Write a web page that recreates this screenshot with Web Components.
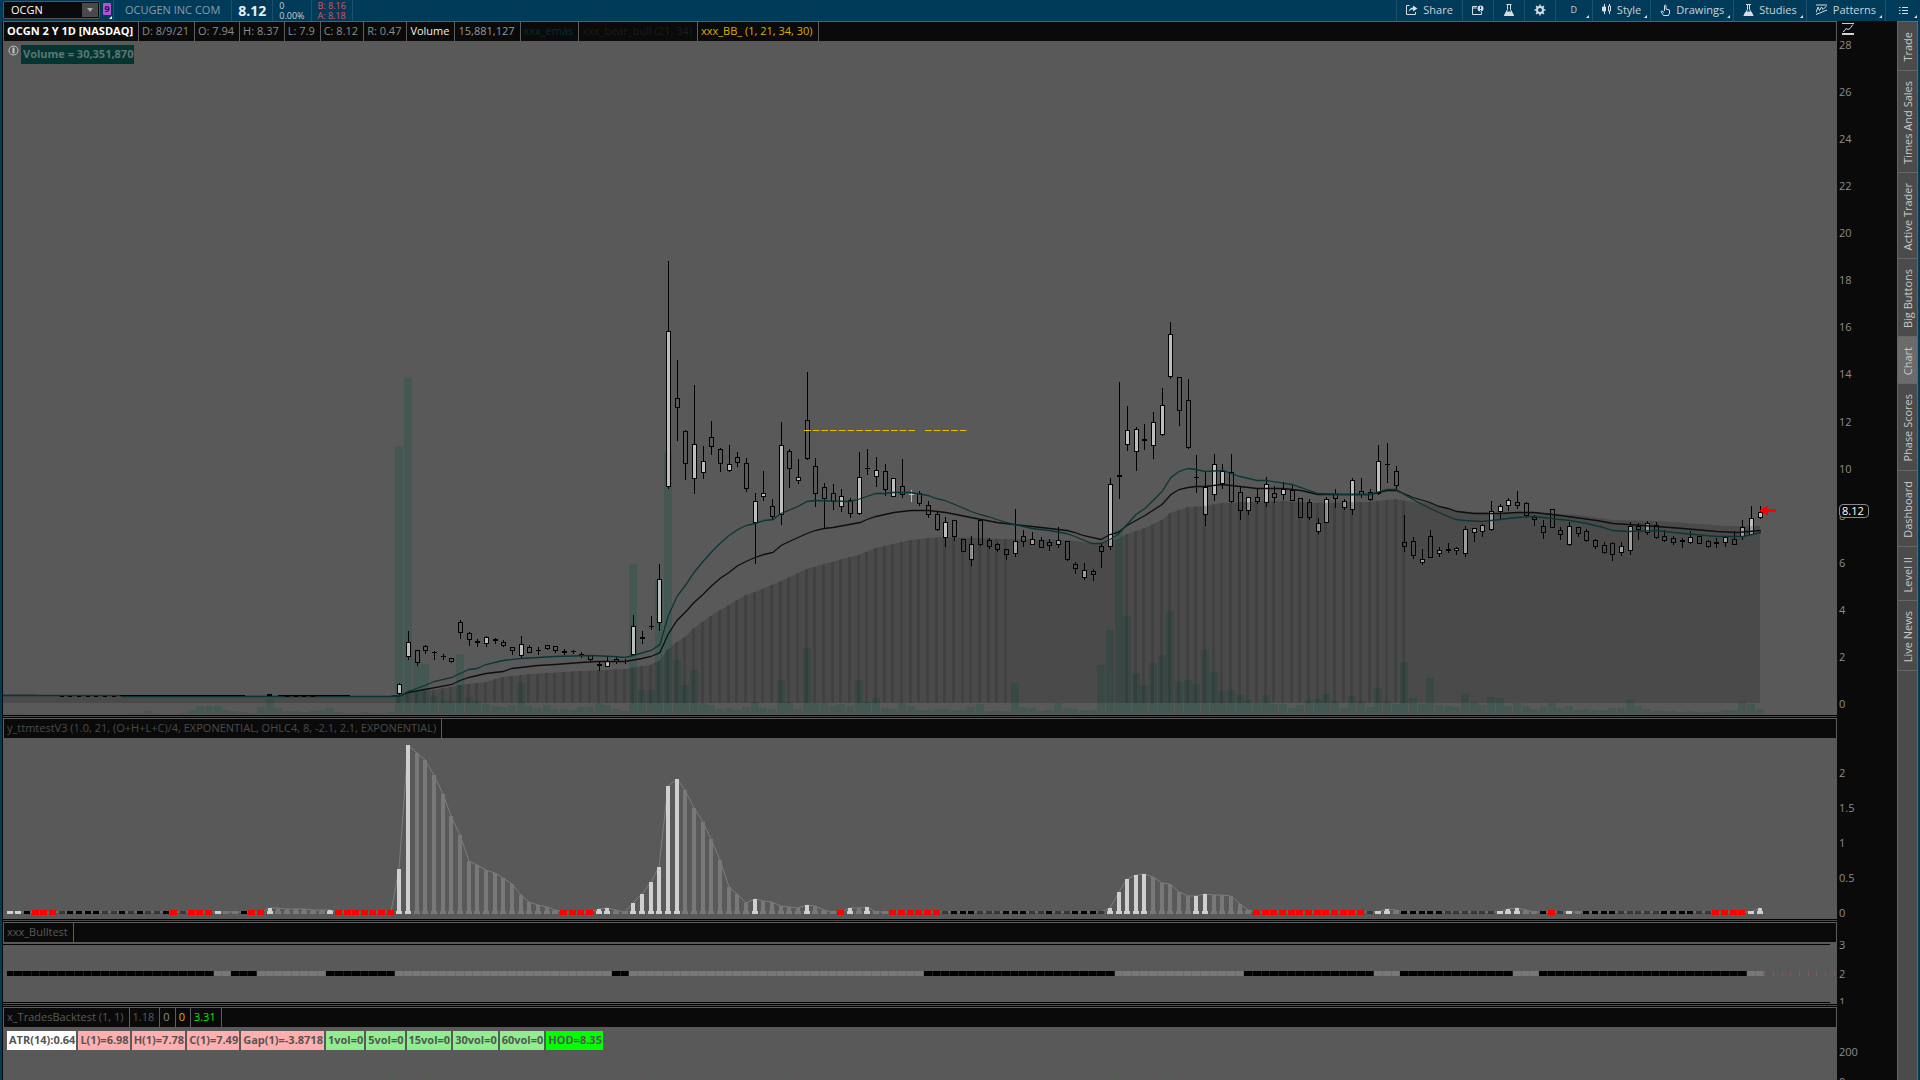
<!DOCTYPE html>
<html lang="en">
<head>
<meta charset="utf-8">
<title>OCGN - Charts</title>
<style>
    html, body {
        margin: 0;
        height: 100%;
    }
    body {
        background-color: #0a0a0a;
        color: #8c8c8c;
        font: 11px/14px "Open Sans", "Noto Sans", sans-serif;
        overflow: hidden;
    }
    .scale-price { padding: 0 0 5px; }
    .scale-momentum { padding: 49px 0 0; }
    .scale-bull { padding: 17px 0 0; margin-bottom: -4px; }
    .scale-backtest { padding: 39px 0 0; margin-bottom: -8px; }
</style>
</head>
<body>
<chart-app>
    <top-bar slot="top"></top-bar>

    <chart-pane style="--grow: 674">
        <head-cell slot="head" style="color: #fff; font-weight: 700">OCGN 2 Y 1D [NASDAQ]</head-cell>
        <head-cell slot="head">D: 8/9/21</head-cell>
        <head-cell slot="head">O: 7.94</head-cell>
        <head-cell slot="head">H: 8.37</head-cell>
        <head-cell slot="head">L: 7.9</head-cell>
        <head-cell slot="head">C: 8.12</head-cell>
        <head-cell slot="head">R: 0.47</head-cell>
        <head-cell slot="head" style="color: #eee">Volume</head-cell>
        <head-cell slot="head" style="color: #999">15,881,127</head-cell>
        <head-cell slot="head" style="color: #062f2c">xxx_emas</head-cell>
        <head-cell slot="head" style="color: #1c1c1c">xxx_bear_bull (21, 34)</head-cell>
        <head-cell slot="head" style="color: #d9ae00">xxx_BB_ (1, 21, 34, 30)</head-cell>
        <price-chart slot="plot"></price-chart>
        <volume-label slot="over">Volume = 30,351,870</volume-label>
        <price-scale slot="axis" class="scale-price" labels="28 26 24 22 20 18 16 14 12 10 8 6 4 2 0" last="8.12"></price-scale>
    </chart-pane>

    <chart-pane style="--grow: 181">
        <head-cell slot="head" style="color: #4a4a4a">y_ttmtestV3 (1.0, 21, (O+H+L+C)/4, EXPONENTIAL, OHLC4, 8, -2.1, 2.1, EXPONENTIAL)</head-cell>
        <momentum-chart slot="plot"></momentum-chart>
        <price-scale slot="axis" class="scale-momentum" labels="2 1.5 1 0.5 0"></price-scale>
    </chart-pane>

    <chart-pane style="--grow: 62">
        <head-cell slot="head" style="color: #595959">xxx_Bulltest</head-cell>
        <bull-chart slot="plot"></bull-chart>
        <price-scale slot="axis" class="scale-bull" labels="3 2 1"></price-scale>
    </chart-pane>

    <chart-pane style="--grow: 53" last>
        <head-cell slot="head" style="color: #595959">x_TradesBacktest (1, 1)</head-cell>
        <head-cell slot="head" style="color: #595959">1.18</head-cell>
        <head-cell slot="head">0</head-cell>
        <head-cell slot="head" style="color: #d9ae00">0</head-cell>
        <head-cell slot="head" style="color: #0e0">3.31</head-cell>
        <backtest-chart slot="plot"></backtest-chart>
        <chip-row slot="over">
            <stat-chip style="--chip: #fff">ATR(14):0.64</stat-chip>
            <stat-chip style="--chip: #ffafaf">L(1)=6.98</stat-chip>
            <stat-chip style="--chip: #ffafaf">H(1)=7.78</stat-chip>
            <stat-chip style="--chip: #ffafaf">C(1)=7.49</stat-chip>
            <stat-chip style="--chip: #ffafaf">Gap(1)=-3.8718</stat-chip>
            <stat-chip style="--chip: #90ee90">1vol=0</stat-chip>
            <stat-chip style="--chip: #90ee90">5vol=0</stat-chip>
            <stat-chip style="--chip: #90ee90">15vol=0</stat-chip>
            <stat-chip style="--chip: #90ee90">30vol=0</stat-chip>
            <stat-chip style="--chip: #90ee90">60vol=0</stat-chip>
            <stat-chip style="--chip: #0f0">HOD=8.35</stat-chip>
        </chip-row>
        <price-scale slot="axis" class="scale-backtest" labels="200 0"></price-scale>
    </chart-pane>

    <side-tabs slot="side"></side-tabs>
</chart-app>

<script>
// every bar sits on the same x grid, shared by all four panes
const BAR = 8.663;
const PRE = 45; // flat bars before the first spike
const barX = (k) => Math.floor(399.98 + k * BAR);

const svg = (top, height, body) => `
    <style>
        :host { display: block; height: 100%; }
        svg { display: block; width: 100%; height: 100%; }
    </style>
    <svg viewBox="3 ${top} 1834 ${height}" preserveAspectRatio="none" aria-hidden="true">${body}</svg>
`;

const rect = (x, y, w, h, fill) => `<rect x="${x}" y="${y}" width="${w}" height="${h}" fill="${fill}"/>`;

class ChartApp extends HTMLElement {
    constructor() {
        super();
        this.attachShadow({ mode: 'open' }).innerHTML = `
            <style>
                :host {
                    display: flex;
                    flex-direction: column;
                    height: 100vh;
                }
                .body {
                    flex: 1;
                    display: flex;
                    min-height: 0;
                    border-left: 2px solid #043a58;
                    border-right: 2px solid #043a58;
                }
                main {
                    flex: 1;
                    display: flex;
                    flex-direction: column;
                    min-width: 0;
                    padding-left: 1px;
                }
            </style>
            <slot name="top"></slot>
            <div class="body">
                <main><slot></slot></main>
                <slot name="side"></slot>
            </div>
        `;
        // the panes are the only children without a slot name
    }
}
window.customElements.define('chart-app', ChartApp);

class ToolButton extends HTMLElement {
    constructor() {
        super();
        this.attachShadow({ mode: 'open' }).innerHTML = `
            <style>
                :host {
                    display: flex;
                    position: relative;
                    border-left: 1px solid #1d506c;
                }
                button {
                    display: flex;
                    align-items: center;
                    justify-content: center;
                    gap: 5px;
                    width: 100%;
                    padding: 0 9px 2px;
                    border: 0;
                    background: none;
                    color: #c9d3d9;
                    font: inherit;
                }
                :host([menu])::after {
                    content: "";
                    position: absolute;
                    right: 3px;
                    bottom: 3px;
                    border: solid transparent;
                    border-width: 0 0 3px 3px;
                    border-bottom-color: #dde3e6;
                }
            </style>
            <button type="button"><slot name="icon"></slot><slot></slot></button>
        `;
        if (this.hasAttribute('label')) {
            this.shadowRoot.querySelector('button').setAttribute('aria-label', this.getAttribute('label'));
        }
    }
}
window.customElements.define('tool-button', ToolButton);

class TopBar extends HTMLElement {
    constructor() {
        super();
        this.attachShadow({ mode: 'open' }).innerHTML = `
            <style>
                :host {
                    display: flex;
                    flex: none;
                    height: 21px;
                    background-color: #003b5a;
                    color: #8a9ba6;
                }
                .symbol {
                    display: flex;
                    box-sizing: border-box;
                    width: 97px;
                    height: 18px;
                    margin: 1px 0 0 3px;
                    border: 1px solid #555;
                    border-radius: 2px;
                    background-color: #0a0a0a;
                }
                .symbol input {
                    flex: 1;
                    min-width: 0;
                    padding: 0 0 0 7px;
                    border: 0;
                    background: none;
                    color: #fff;
                    font: inherit;
                }
                .symbol button {
                    width: 16px;
                    padding: 0;
                    margin: 1px;
                    border: 0;
                    background-color: #4a4a4a;
                }
                .symbol svg { display: block; margin: auto; }
                .link {
                    position: relative;
                    box-sizing: border-box;
                    width: 13px;
                    padding: 3px 0 0 3px;
                }
                .badge {
                    display: block;
                    width: 8px;
                    height: 12px;
                    padding: 0;
                    border: 0;
                    border-radius: 1px;
                    background-color: #b452d4;
                    color: #24102c;
                    font: 700 9px/12px "Open Sans", sans-serif;
                }
                .link i {
                    position: absolute;
                    right: 1px;
                    bottom: 2px;
                    border: solid transparent;
                    border-width: 0 0 3px 3px;
                    border-bottom-color: #fff;
                }
                .cell {
                    display: flex;
                    align-items: center;
                    padding: 0 6px 2px;
                    border-left: 1px solid #1d506c;
                }
                .name { padding: 0 11px 2px; }
                .last { padding-bottom: 0; color: #e8eef2; font-size: 14px; font-weight: 700; }
                .two {
                    flex-direction: column;
                    align-items: flex-start;
                    justify-content: center;
                    padding-bottom: 0;
                    font-size: 9px;
                    line-height: 10px;
                    color: #c5cfd5;
                }
                .quote { color: #dc5560; border-right: 1px solid #1d506c; }
                nav { display: flex; margin-left: auto; }
                svg { fill: none; stroke: #d5dde2; }
            </style>
            <div class="symbol">
                <input value="OCGN" aria-label="Symbol">
                <button type="button" aria-label="Recent symbols"><svg width="8" height="5"><path d="M1 0h6L4 4z" fill="#aaa" stroke="none"/></svg></button>
            </div>
            <div class="link"><button class="badge" type="button">9</button><i></i></div>
            <div class="cell name">OCUGEN INC COM</div>
            <div class="cell last">8.12</div>
            <div class="cell two"><span>0</span><span>0.00%</span></div>
            <div class="cell two quote"><span>B: 8.16</span><span>A: 8.18</span></div>
            <nav>
                <tool-button><svg slot="icon" width="12" height="11"><path d="M3.500 1.500H.5v9h9V8"/><path d="M2.500 8C3 5 5 3.500 7 3.500V1.500L11.500 4.500 7 7.500V5.500C5 5.500 4 6 2.500 8z" fill="#d5dde2" stroke="none"/></svg>Share</tool-button>
                <tool-button label="Note"><svg slot="icon" width="12" height="10"><path d="M5 1.500H.5v8h9V7M.5 3h4"/><circle cx="8.500" cy="3.500" r="3" fill="#d5dde2" stroke="none"/><path d="M8.500 1.500v2.500M8.500 5v1" stroke="#003b5a"/></svg></tool-button>
                <tool-button label="Lab"><svg slot="icon" width="12" height="12"><path d="M3.500.5h5M4.500.5v5L1.500 11.500h9L7.500 5.500v-5"/><path d="M3.500 8h5l2 3.500h-9z" fill="#d5dde2"/></svg></tool-button>
                <tool-button label="Settings"><svg slot="icon" width="12" height="12"><circle cx="6" cy="6" r="3" stroke-width="2"/><path d="M6 .5v2M6 9.500v2M.5 6h2M9.500 6h2M2.100 2.100l1.500 1.500M8.400 8.400l1.500 1.500M2.100 9.900l1.500-1.500M8.400 3.600l1.500-1.500" stroke-width="1.500"/></svg></tool-button>
                <tool-button menu style="width: 36px; font-size: 9px">D</tool-button>
                <tool-button menu><svg slot="icon" width="10" height="11"><path d="M2.500 0v10M7.500 0v10"/><path d="M.5 3h3v4h-3z" fill="#d5dde2"/><path d="M6.500 2h2v5h-2z" fill="#003b5a"/></svg>Style</tool-button>
                <tool-button menu><svg slot="icon" width="11" height="12"><path d="M4.500 7V1.500a1 1 0 0 1 1.500 0V5L9.500 6v3l-1 2.500h-5L1 7.500l1-.5 2 1.500"/></svg>Drawings</tool-button>
                <tool-button menu><svg slot="icon" width="11" height="12"><path d="M3 .5h5M4.500.5v5L1 11.500h9L6.500 5.500v-5"/><path d="M3 8h5l2 3.500H1z" fill="#d5dde2"/></svg>Studies</tool-button>
                <tool-button menu><svg slot="icon" width="12" height="11"><path d="M0 1h11M0 8.500L2 3l1.500 3.500L5.500 3 7 5.500 10.500 2M0 10.500L11 6" /></svg>Patterns</tool-button>
                <tool-button menu label="Menu" style="width: 34px"><svg slot="icon" width="9" height="8"><path d="M0 1.500h1.500M3 1.500h6M0 4.500h1.500M3 4.500h6M0 7.500h1.500M3 7.500h6"/></svg></tool-button>
            </nav>
        `;
    }
}
window.customElements.define('top-bar', TopBar);

class ChartPane extends HTMLElement {
    constructor() {
        super();
        this.attachShadow({ mode: 'open' }).innerHTML = `
            <style>
                :host {
                    display: grid;
                    grid-template-columns: 1fr 60px;
                    grid-template-rows: 20px minmax(0, 1fr) 3px;
                    flex: var(--grow) 1 23px;
                    min-height: 0;
                }
                :host([last]) {
                    grid-template-rows: 20px minmax(0, 1fr);
                    flex-basis: 20px;
                }
                header {
                    display: flex;
                    border: 1px solid #5e5e5e;
                    border-bottom: 0;
                    background-color: #0a0a0a;
                    overflow: hidden;
                }
                .plot {
                    position: relative;
                    grid-row: 2;
                    min-height: 0;
                    background-color: #595959;
                }
                .over {
                    position: absolute;
                    left: 4px;
                    top: 4px;
                }
                .axis {
                    grid-column: 2;
                    grid-row: 1 / 3;
                    display: flex;
                    flex-direction: column;
                    min-height: 0;
                    overflow: hidden;
                }
                .split {
                    grid-row: 3;
                    height: 1px;
                    border: solid #000;
                    border-width: 1px 0;
                    background-color: #4a4a4a;
                }
                :host([last]) .split { display: none; }
            </style>
            <header><slot name="head"></slot></header>
            <div class="plot"><slot name="plot"></slot><div class="over"><slot name="over"></slot></div></div>
            <div class="axis"><slot name="axis"></slot></div>
            <div class="split"></div>
        `;
    }
}
window.customElements.define('chart-pane', ChartPane);

class HeadCell extends HTMLElement {
    constructor() {
        super();
        this.attachShadow({ mode: 'open' }).innerHTML = `
            <style>
                :host {
                    display: block;
                    padding: 0 5px 2px 3px;
                    border-right: 1px solid #5e5e5e;
                    line-height: 17px;
                    white-space: nowrap;
                }
            </style>
            <slot></slot>
        `;
    }
}
window.customElements.define('head-cell', HeadCell);

class VolumeLabel extends HTMLElement {
    constructor() {
        super();
        this.attachShadow({ mode: 'open' }).innerHTML = `
            <style>
                :host { display: flex; }
                svg { display: block; fill: none; stroke: #c4c4c4; }
                span {
                    padding: 0 1px 2px 2px;
                    background-color: #033531;
                    color: #5f7573;
                    font-weight: 700;
                    line-height: 17px;
                }
            </style>
            <svg width="14" height="13"><circle cx="6.500" cy="5.500" r="4.500"/><path d="M6.500 2.500v6" stroke-width="2"/></svg>
            <span><slot></slot></span>
        `;
    }
}
window.customElements.define('volume-label', VolumeLabel);

class ChipRow extends HTMLElement {
    constructor() {
        super();
        this.attachShadow({ mode: 'open' }).innerHTML = `
            <style>
                :host { display: flex; gap: 2px; }
            </style>
            <slot></slot>
        `;
    }
}
window.customElements.define('chip-row', ChipRow);

class StatChip extends HTMLElement {
    constructor() {
        super();
        this.attachShadow({ mode: 'open' }).innerHTML = `
            <style>
                :host {
                    display: block;
                    padding: 0 1px 2px 2px;
                    background-color: var(--chip);
                    color: #555;
                    font-weight: 700;
                    line-height: 17px;
                    white-space: nowrap;
                }
            </style>
            <slot></slot>
        `;
    }
}
window.customElements.define('stat-chip', StatChip);

class PriceScale extends HTMLElement {
    constructor() {
        super();
        const labels = this.getAttribute('labels').split(' ');
        const last = this.getAttribute('last');
        this.attachShadow({ mode: 'open' }).innerHTML = `
            <style>
                :host {
                    flex: 1;
                    display: flex;
                    flex-direction: column;
                    position: relative;
                    line-height: 12px;
                }
                .labels {
                    flex: 1;
                    display: flex;
                    flex-direction: column;
                    justify-content: space-between;
                    padding-left: 2px;
                }
                .fit {
                    height: 18px;
                    padding-left: 5px;
                }
                .fit svg { display: block; fill: none; stroke: #d0d0d0; }
                .last {
                    position: absolute;
                    left: 2px;
                    top: 70.6%;
                    transform: translateY(-50%);
                    padding: 0 4px 0 2px;
                    border: 1px solid #888;
                    border-radius: 4px;
                    background-color: #0a0a0a;
                    color: #fff;
                }
            </style>
            ${last ? '<div class="fit"><svg width="13" height="14"><path d="M0 2.500h12"/><path d="M0 13h12" stroke-width="2"/><path d="M1 10.500h1l2-3 2 1 2-1 3-4"/></svg></div>' : ''}
            <div class="labels">${labels.map((l) => `<span>${l}</span>`).join('')}</div>
            ${last ? `<div class="last">${last}</div>` : ''}
        `;
    }
}
window.customElements.define('price-scale', PriceScale);

class SideTabs extends HTMLElement {
    constructor() {
        super();
        const tabs = ['Trade', 'Times And Sales', 'Active Trader', 'Big Buttons', 'Chart', 'Phase Scores', 'Dashboard', 'Level II', 'Live News'];
        this.attachShadow({ mode: 'open' }).innerHTML = `
            <style>
                :host {
                    display: flex;
                    flex-direction: column;
                    box-sizing: border-box;
                    width: 21px;
                    border: solid #666;
                    border-width: 1px 1px 0;
                    background-color: #4b4b4b;
                }
                button {
                    width: 19px;
                    padding: 10px 0 8px;
                    border: 0;
                    border-bottom: 1px solid #666;
                    background: none;
                    color: #c8c8c8;
                    font: inherit;
                }
                button[aria-pressed] { background-color: #6b6b6b; }
                span {
                    display: inline-block;
                    writing-mode: vertical-rl;
                    transform: rotate(180deg);
                    line-height: 19px;
                    vertical-align: top;
                }
            </style>
            ${tabs.map((t) => `<button type="button"${t === 'Chart' ? ' aria-pressed="true"' : ''}><span>${t}</span></button>`).join('')}
        `;
    }
}
window.customElements.define('side-tabs', SideTabs);

// high, body top, body bottom, low; last field: 1 = up bar, 0 = down bar, 2 = doji, 3 = highlighted doji
const CANDLES = [
    [683,684,693,694,1],[631,642,656,659,1],[650,650,662,665,0],[645,646,650,653,0],[651,652,652,659,2],
    [654,656,656,659,2],[658,658,661,662,0],[620,622,632,638,0],[632,633,639,645,0],[639,641,642,646,2],
    [636,637,643,646,1],[638,639,640,643,2],[640,642,645,646,0],[647,647,650,654,0],[636,644,655,658,1],
    [645,647,652,652,0],[647,650,650,654,2],[645,645,648,649,0],[646,646,650,652,0],[649,651,652,654,2],
    [650,651,651,653,2],[652,654,654,657,2],[655,655,659,660,0],[661,664,665,670,2],[657,661,666,666,1],
    [657,659,661,663,0],[659,661,661,663,2],[615,626,654,655,1],[631,637,638,643,2],[616,626,626,629,2],
    [564,579,622,630,1],[261,331,486,488,1],[360,398,407,440,0],[430,431,463,479,0],[385,444,478,493,1],
    [446,461,472,478,1],[421,437,446,454,0],[448,449,463,471,0],[445,464,470,471,1],[452,457,462,466,0],
    [458,463,488,491,0],[493,501,522,563,1],[471,493,496,500,1],[499,506,516,519,0],[422,445,514,524,1],
    [449,451,468,487,0],[459,477,480,483,1],[372,420,458,459,0],[458,466,493,506,0],[483,487,498,527,0],
    [484,493,501,509,0],[489,496,506,511,1],[498,500,513,517,0],[452,477,513,514,1],[449,468,468,474,2],
    [457,470,476,486,1],[464,471,489,495,0],[478,478,496,496,1],[459,486,494,497,0],[490,494,494,501,3],
    [491,493,503,505,0],[501,505,514,517,0],[511,514,529,530,0],[517,522,537,546,1],[520,520,536,540,0],
    [539,539,551,551,0],[536,544,559,565,1],[520,520,544,545,0],[538,540,546,548,0],[543,544,549,551,0],
    [549,549,554,559,0],[509,541,553,556,1],[530,536,541,546,0],[532,539,544,544,1],[537,540,547,547,0],
    [539,542,545,550,0],[527,540,544,547,1],[541,541,559,560,0],[562,564,568,573,0],[563,570,577,579,1],
    [569,571,574,580,0],[544,546,551,567,0],[478,484,546,549,1],[382,475,476,498,2],[406,430,444,450,1],
    [427,429,451,470,1],[424,439,440,449,2],[412,422,445,458,1],[388,405,434,435,1],[322,334,376,378,1],
    [377,377,410,425,0],[379,400,447,448,0],[455,477,477,492,2],[472,487,514,525,1],[454,464,494,500,1],
    [464,471,483,488,1],[454,472,501,502,0],[486,492,510,519,0],[497,497,510,514,1],[489,497,501,503,0],
    [477,484,502,506,1],[486,493,497,502,0],[482,489,494,499,1],[485,490,500,500,0],[498,498,517,517,0],
    [499,502,517,519,0],[518,523,531,533,1],[497,499,522,522,1],[489,494,498,507,0],[499,501,507,509,1],
    [478,480,509,514,1],[478,491,494,497,0],[489,492,499,500,0],[445,461,493,494,1],[443,464,464,482,2],
    [466,471,485,490,0],[515,542,546,551,0],[537,541,555,558,0],[549,559,562,564,1],[530,536,557,557,0],
    [547,550,553,556,1],[543,549,550,552,2],[547,548,550,554,1],[526,529,553,556,1],[528,528,532,541,1],
    [524,525,531,536,1],[501,511,529,530,1],[504,506,511,518,1],[498,500,505,510,1],[491,502,505,508,0],
    [502,503,515,517,0],[515,517,519,525,0],[520,526,532,538,0],[509,509,527,527,0],[527,530,534,539,0],
    [522,526,544,545,1],[527,527,533,536,0],[529,531,540,541,0],[539,540,546,548,0],[542,545,552,553,0],
    [542,543,554,560,0],[542,546,552,555,1],[522,526,550,554,1],[523,526,529,539,0],[521,523,532,534,1],
    [522,525,537,538,0],[530,536,540,541,0],[536,538,542,544,0],[538,540,541,547,2],[531,537,542,543,1],
    [536,536,543,543,0],[540,541,546,547,0],[538,542,543,547,2],[536,537,542,546,1],[531,539,544,544,0],
    [520,527,536,539,1],[506,518,534,534,1],[506,512,517,518,1]
];

const VOLUME = [
    // flat lead-in
    1,1,0,0,0,0,0,0,0,0,0,0,0,0,1,1,3,1,0,0,1,4,8,8,8,4,3,2,1,7,15,6,3,3,2,3,4,6,2,1,1,2,1,1,2,
    268,336,56,50,18,14,13,60,17,13,10,8,7,9,31,8,6,9,5,5,4,7,7,11,9,5,3,150,24,24,134,262,54,29,44,
    11,9,5,6,4,7,12,6,5,34,12,5,66,11,11,8,10,8,34,12,16,6,5,11,8,4,4,5,5,4,4,7,10,3,3,3,31,7,6,3,
    4,11,6,5,4,4,49,84,184,98,41,29,51,59,103,32,34,30,64,42,23,24,19,14,11,19,10,10,6,9,14,15,20,13,
    6,18,13,7,26,13,10,52,16,10,36,9,8,7,21,12,9,17,16,8,11,8,5,7,11,6,8,4,5,4,4,6,6,14,8,5,3,3,3,2,
    3,2,2,2,4,4,12,10,5
];

const EMA_FAST = '3,695 120,695 122,696 391,696 401,695 408,691 425,685 434,681 452,677 460,673 469,669 477,668 486,664 503,660 521,658 538,657 555,656 590,655 613,656 625,657 633,655 651,650 660,644 668,616 677,596 686,584 694,572 703,561 712,551 720,543 729,535 738,529 746,525 755,523 764,520 773,519 781,513 798,506 807,501 815,500 850,501 858,499 876,493 885,493 893,492 911,492 928,495 936,498 945,500 962,507 971,511 980,514 988,516 1006,522 1014,524 1032,528 1049,530 1066,533 1075,536 1092,543 1101,543 1110,539 1118,534 1136,514 1145,508 1162,491 1171,477 1179,471 1188,468 1196,469 1205,471 1223,470 1231,473 1240,476 1257,480 1266,480 1292,484 1318,493 1344,494 1370,494 1387,489 1396,489 1413,499 1430,508 1448,516 1456,519 1465,520 1482,521 1500,519 1517,517 1534,516 1560,519 1570,520 1587,523 1603,527 1613,530 1628,531 1657,530 1673,532 1717,536 1743,536 1761,532';
const EMA_SLOW = '391,696 401,695 408,692 425,689 452,684 460,680 469,677 486,673 503,671 512,668 538,665 555,664 581,662 597,661 625,661 642,658 651,656 660,652 668,634 677,620 686,611 694,602 703,594 712,585 720,578 729,572 738,565 746,561 755,557 764,554 773,552 781,545 798,537 807,533 815,530 824,528 833,527 860,522 867,519 876,516 894,512 911,510 928,510 946,512 971,517 997,522 1014,524 1041,527 1067,530 1075,532 1083,535 1101,539 1110,534 1118,532 1127,525 1145,515 1162,504 1171,494 1179,489 1188,487 1196,486 1205,486 1222,484 1240,486 1257,488 1283,488 1301,490 1318,494 1370,494 1387,490 1396,490 1413,497 1430,502 1439,506 1448,508 1457,511 1474,513 1500,513 1517,512 1534,512 1560,515 1597,520 1613,523 1628,524 1657,526 1683,528 1717,531 1737,532 1761,530';
const CLOUD = [[3,694],[36,694],[37,695],[391,696],[408,693],[434,690],[460,685],[486,682],[503,677],[530,674],[581,671],[625,669],[650,665],[660,660],[668,649],[677,642],[686,636],[694,628],[712,615],[729,605],[746,595],[755,592],[781,581],[807,569],[824,564],[850,557],[858,555],[876,548],[893,544],[911,540],[928,538],[946,537],[1006,539],[1067,540],[1092,543],[1101,543],[1118,539],[1127,534],[1145,528],[1162,520],[1170,513],[1188,507],[1205,506],[1222,503],[1283,501],[1313,503],[1367,502],[1395,499],[1413,502],[1430,503],[1457,511],[1500,513],[1534,512],[1547,513],[1580,515],[1613,520],[1657,521],[1700,524],[1727,526],[1760,526]];

const cloudY = (x) => {
    const i = CLOUD.findIndex((p) => p[0] >= x);
    const [x1, y1] = CLOUD[i];
    const [x0, y0] = CLOUD[i - 1];
    return Math.round(y0 + (y1 - y0) * (x - x0) / (x1 - x0));
};

class PriceChart extends HTMLElement {
    constructor() {
        super();
        const volume = VOLUME.map((h, i) => h ? rect(barX(i - PRE) - 4, 714 - h, 8, h, '#455753') : '').join('');

        const candles = CANDLES.map(([high, top, bottom, low, kind], k) => {
            const x = barX(k);
            if (kind >= 2) {
                const c = kind === 3 ? '#bbb' : '#000';
                return rect(x, high, 1, low - high + 1, c) + rect(x - 2, top, 5, bottom - top + 1, c);
            }
            return rect(x, high, 1, low - high + 1, '#000')
                + rect(x - 2, top, 5, bottom - top + 1, '#000')
                + rect(x - 1, top + 1, 3, bottom - top - 1, kind ? '#bdbdbd' : '#595959');
        }).join('');

        const flat = [6, 7, 8, 9, 10, 11, 12, 32, 33, 34, 35].map((i) => rect(barX(i - PRE) - 2, 696, 4, 1, '#000')).join('')
            + rect(120, 695, 125, 1, '#000') + rect(278, 695, 72, 1, '#000') + rect(267, 694, 5, 2, '#000');

        // the striped parts of the cloud are up-trend runs
        const stripes = CANDLES.map((c, k) => {
            if (k > 70 && k < 84 || k > 116) return '';
            const x = barX(k);
            const y = cloudY(x);
            return rect(x - 2, y, 3, 703 - y, '#000');
        }).join('');

        const cloud = 'M3 703L' + CLOUD.map((p) => p.join(' ')).join('L') + 'V703z';

        this.attachShadow({ mode: 'open' }).innerHTML = svg(41, 674, `
            <g shape-rendering="crispEdges">${volume}${candles}</g>
            <path d="${cloud}" opacity=".17"/>
            <g shape-rendering="crispEdges" opacity=".11">${stripes}</g>
            <polyline points="${EMA_SLOW}" transform="translate(0 .5)" fill="none" stroke="#0e0e0e" stroke-width="1.3"/>
            <polyline points="${EMA_FAST}" transform="translate(0 .5)" fill="none" stroke="#0a3635" stroke-width="1.3"/>
            <g shape-rendering="crispEdges">${flat}</g>
            <path d="M804 430.500H915M925 430.500H967" stroke="#ebbd00" stroke-dasharray="6.700 2"/>
            <path d="M1759 510.500l9-5v3.500h8v3h-8v3.500z" fill="#f00"/>
        `);
    }
}
window.customElements.define('price-chart', PriceChart);

// W rising, G fading, R squeeze, K/D idle
const STATE = 'WWKRRRDKKKKDDKDKDDKRDRRRWGGKRRWGGGGGGWRRRRRRR'
    + 'WWGGGGGGGGGGGGGGGGGRRRRWWGGWWWWWWGGGGGGGGWGGGGGWGGGRWGWGGRRRRRRDKKKDDDKKKDDKDDKKKD'
    + 'WWWWWGGGGGWWGGGGGRRRRRRRRRRRRRDWWGKKKKKDDDDDDWWWGGKRDWGKKKKDDDDDKKKKDDRRRRWW';
const STATE_COLOR = { W: '#cfcfcf', G: '#787878', K: '#000', D: '#383838', R: '#f00' };
// bar tops, by bar index after the lead-in
const TOPS = {
    '-15': 908, '-14': 908, '-13': 909, '-12': 909, '-11': 909, '-10': 910, '-9': 910, '-8': 910,
    0: 869, 1: 745, 2: 753, 3: 760, 4: 775, 5: 794, 6: 816, 7: 835, 8: 861, 9: 865, 10: 870, 11: 873, 12: 878,
    13: 884, 14: 895, 15: 902, 16: 905, 17: 907, 18: 910, 23: 909, 24: 908, 25: 910, 27: 903, 28: 894, 29: 882,
    30: 867, 31: 786, 32: 779, 33: 790, 34: 808, 35: 822, 36: 839, 37: 860, 38: 887, 39: 894, 40: 903, 41: 899,
    42: 901, 43: 902, 44: 906, 45: 907, 46: 908, 47: 905, 48: 906, 49: 910, 52: 908, 53: 908, 54: 907, 82: 908,
    83: 892, 84: 879, 85: 875, 86: 874, 87: 877, 88: 883, 89: 884, 90: 892, 91: 896, 92: 896, 93: 894, 94: 895,
    95: 895, 96: 896, 97: 904, 98: 910, 114: 909, 115: 910, 128: 909, 129: 908, 130: 910, 157: 908
};

class MomentumChart extends HTMLElement {
    constructor() {
        super();
        let bars = '';
        const line = [];
        [...STATE].forEach((s, i) => {
            const k = i - PRE;
            const x = barX(k);
            const top = TOPS[k];
            line.push(`${x},${top || 912}`);
            if (top) bars += rect(x - 2, top, 4, 912 - top, STATE_COLOR[s]);
            bars += s === 'R'
                ? `<rect x="${x - 4}" y="910" width="7" height="5" rx="1" fill="#f00"/>`
                : rect(x - 3, 911, 6, 3, STATE_COLOR[s]);
        });
        this.attachShadow({ mode: 'open' }).innerHTML = svg(738, 181, `
            <polyline points="${line.join(' ')}" fill="none" stroke="#7c7c7c"/>
            <g shape-rendering="crispEdges">${bars}</g>
        `);
    }
}
window.customElements.define('momentum-chart', MomentumChart);

class BullChart extends HTMLElement {
    constructor() {
        super();
        // first bar of each bearish run and the bar after its end
        const runs = [[-45, -21], [-19, -16], [-8, 0], [25, 27], [61, 83], [98, 113], [116, 129], [132, 156]];
        let cells = '';
        for (let k = -PRE; k < 158; k++) {
            const bear = runs.some(([a, b]) => k >= a && k < b);
            const x = k === -PRE ? 7 : barX(k) - 4;
            cells += rect(x, 971, barX(k + 1) - 4 - x, 5, bear ? '#1e1e1e' : '#6b6b6b');
            cells += rect(x, 971, barX(k + 1) - 5 - x, 5, bear ? '#000' : '#777');
        }
        for (let k = 158; k < 167; k++) {
            cells += rect(barX(k) - 4, 971, 1, 5, '#80595e');
        }
        this.attachShadow({ mode: 'open' }).innerHTML = svg(942, 62, `
            <g shape-rendering="crispEdges">
                ${rect(3, 944, 1827, 1, '#000')}
                ${rect(3, 1002, 1827, 1, '#000')}
                ${cells}
            </g>
        `);
    }
}
window.customElements.define('bull-chart', BullChart);

class BacktestChart extends HTMLElement {
    constructor() {
        super();
        this.attachShadow({ mode: 'open' }).innerHTML = svg(1027, 53, `
            <g fill="none" stroke="#4b654b" stroke-dasharray="3 2">
                <path d="M392 1080L400 1056 404 1051 408 1051 415 1080M423 1080L426 1078 430 1080M455 1080L461 1071 468 1080"/>
                <path d="M627 1080L634 1069 640 1080M652 1080L661 1072 668 1050 676 1080"/>
                <path d="M775 1080L782 1077 788 1080M1101 1080L1107 1075 1114 1076 1119 1080M1166 1080L1171 1078 1176 1080"/>
            </g>
        `);
    }
}
window.customElements.define('backtest-chart', BacktestChart);
</script>
</body>
</html>
